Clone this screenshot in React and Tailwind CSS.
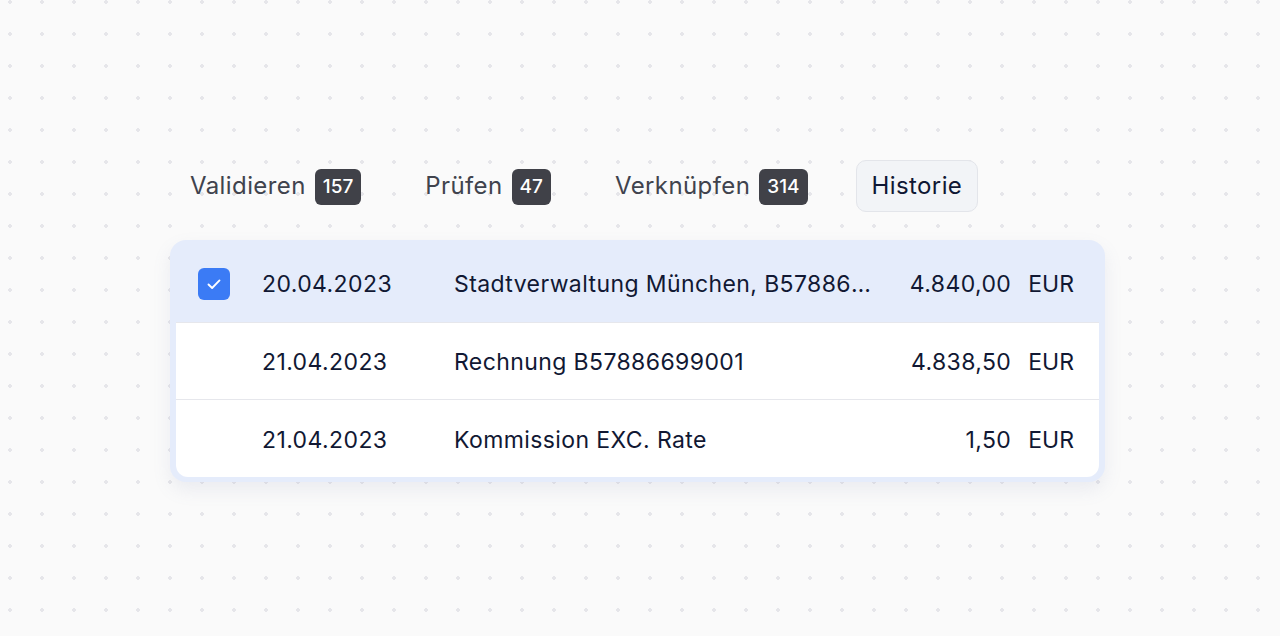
const tabs = [
  { label: 'Validieren', count: 157 },
  { label: 'Prüfen', count: 47 },
  { label: 'Verknüpfen', count: 314 },
  { label: 'Historie', active: true },
];

const rows = [
  { date: '21.04.2023', text: 'Rechnung B57886699001', amount: '4.838,50' },
  { date: '21.04.2023', text: 'Kommission EXC. Rate', amount: '1,50' },
];

const Row = ({ checked, date, text, amount, first }) => (
  <div
    className={
      (first ? 'h-[82px] pl-[28px] pr-[31px] pt-[6px] ' : 'h-[77px] pl-[22px] pr-[25px] pt-[3px] ') +
      'grid grid-cols-[32px_224px_1fr_auto_auto] items-center'
    }
  >
    <div>
      {checked && (
        <div className="flex h-8 w-8 items-center justify-center rounded-md bg-[#3b7bf5]">
          <svg width="20" height="20" viewBox="0 0 16 16" fill="none">
            <path d="M3.6 8.4l2.9 2.8 5.9-6.1" stroke="white" strokeWidth="1.5" strokeLinecap="round" strokeLinejoin="round" />
          </svg>
        </div>
      )}
    </div>
    <div className="pl-8">{date}</div>
    <div className="min-w-0 pr-[30px]">
      <div className="truncate">{text}</div>
    </div>
    <div className="text-right">{amount}</div>
    <div className="pl-[17px] tracking-normal">EUR</div>
  </div>
);

export default function App() {
  return (
    <div className="flex h-[636px] w-full items-center justify-center bg-[#fafafa] bg-[radial-gradient(#e6e6ea_1.6px,transparent_1.8px)] bg-[size:32px_32px] bg-[position:-6px_-14px] pr-[5px] pt-[6px] font-['Inter',sans-serif] tracking-[0.4px]">
      <div className="flex w-[935px] flex-col gap-7">
        {/* Tabs */}
        <div className="flex gap-8 pl-1">
          {tabs.map((tab) => (
            <div
              key={tab.label}
              className={
                tab.active
                  ? 'flex h-[52px] items-center rounded-[10px] border border-[#e3e5ea] bg-[#f2f4f7] px-[15px] text-[24px] text-[#0f1733]'
                  : 'flex h-[52px] items-center gap-[9px] px-4 text-[24px] text-[#40434d]'
              }
            >
              <span>{tab.label}</span>
              {tab.count && (
                <span className="mt-[2px] flex h-9 items-center rounded-md bg-[#404148] px-2 text-[19px] font-medium tracking-normal text-white">
                  {tab.count}
                </span>
              )}
            </div>
          ))}
        </div>

        {/* Table card */}
        <div className="rounded-2xl bg-[#e5ecfb] pb-[5px] text-[23px] text-[#111833] shadow-[0_8px_18px_rgba(120,130,170,0.12)]">
          <Row first checked date="20.04.2023" text="Stadtverwaltung München, B57886699001" amount="4.840,00" />
          <div className="mx-[6px] divide-y divide-[#e6e7ec] overflow-hidden rounded-b-[12px] border-t border-[#e6e7ec] bg-white">
            {rows.map((r, i) => (
              <Row key={i} {...r} />
            ))}
          </div>
        </div>
      </div>
    </div>
  );
}
